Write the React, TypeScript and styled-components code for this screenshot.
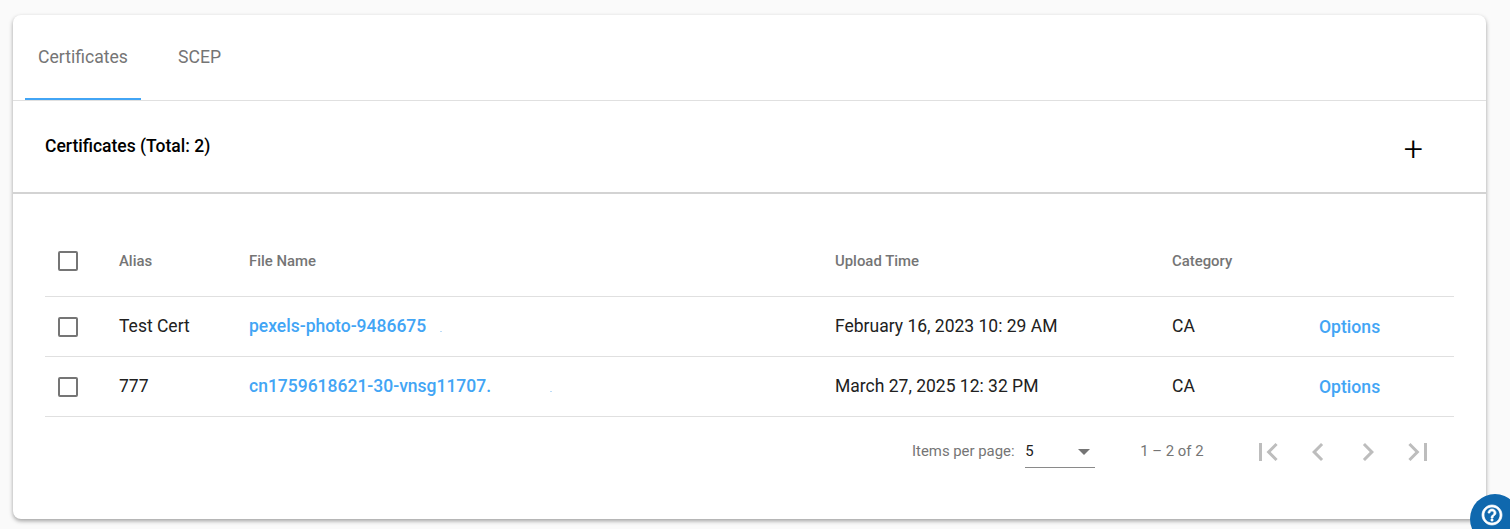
import React from 'react';
import styled, { createGlobalStyle } from 'styled-components';

const GlobalStyle = createGlobalStyle`
  html, body {
    margin: 0;
    padding: 0;
    background: #fafafa;
    font-family: Roboto, "Liberation Sans", sans-serif;
  }
  body {
    height: 529px;
    overflow: hidden;
  }
`;

const rows = [
  { alias: 'Test Cert', file: 'pexels-photo-9486675', time: 'February 16, 2023 10: 29 AM', category: 'CA', gap: 14 },
  { alias: '777', file: 'cn1759618621-30-vnsg11707.', time: 'March 27, 2025 12: 32 PM', category: 'CA', gap: 59 },
];

function App() {
  return (
    <>
      <GlobalStyle />
      <Page>
        <Card>
          <TabBar>
            <Tab $active>Certificates</Tab>
            <Tab>SCEP</Tab>
          </TabBar>
          <SectionHeader>
            <SectionTitle>Certificates (Total: 2)</SectionTitle>
            <AddButton>+</AddButton>
          </SectionHeader>
          <TableWrap>
            <HeadRow>
              <CheckCell><CheckBox /></CheckCell>
              <HeadCell>Alias</HeadCell>
              <HeadCell>File Name</HeadCell>
              <HeadCell>Upload Time</HeadCell>
              <HeadCell>Category</HeadCell>
              <HeadCell />
            </HeadRow>
            {rows.map((row) => (
              <BodyRow key={row.alias}>
                <CheckCell><CheckBox /></CheckCell>
                <BodyCell>{row.alias}</BodyCell>
                <FileLink>
                  {row.file}
                  <Smudge $gap={row.gap} />
                </FileLink>
                <BodyCell>{row.time}</BodyCell>
                <BodyCell>{row.category}</BodyCell>
                <OptionsLink>Options</OptionsLink>
              </BodyRow>
            ))}
            <Paginator>
              <PageLabel>Items per page:</PageLabel>
              <PageSelect>
                <span>5</span>
                <Caret />
              </PageSelect>
              <RangeLabel>1 – 2 of 2</RangeLabel>
              <PagerButtons>
                <PagerButton>
                  <svg width="36" height="36" viewBox="0 0 24 24" fill="currentColor">
                    <path d="M18.41 16.59L13.82 12l4.59-4.59L17 6l-6 6 6 6zM6 6h2v12H6z" />
                  </svg>
                </PagerButton>
                <PagerButton>
                  <svg width="36" height="36" viewBox="0 0 24 24" fill="currentColor">
                    <path d="M15.41 7.41L14 6l-6 6 6 6 1.41-1.41L10.83 12z" />
                  </svg>
                </PagerButton>
                <PagerButton>
                  <svg width="36" height="36" viewBox="0 0 24 24" fill="currentColor">
                    <path d="M10 6L8.59 7.41 13.17 12l-4.58 4.59L10 18l6-6z" />
                  </svg>
                </PagerButton>
                <PagerButton>
                  <svg width="36" height="36" viewBox="0 0 24 24" fill="currentColor">
                    <path d="M5.59 7.41L10.18 12l-4.59 4.59L7 18l6-6-6-6zM16 6h2v12h-2z" />
                  </svg>
                </PagerButton>
              </PagerButtons>
            </Paginator>
          </TableWrap>
        </Card>
        <HelpBadge>
          <svg width="24" height="24" viewBox="0 0 24 24" fill="#fff" stroke="#fff" strokeWidth="0.7">
            <path d="M11 18h2v-2h-2v2zm1-16C6.48 2 2 6.48 2 12s4.48 10 10 10 10-4.48 10-10S17.52 2 12 2zm0 18c-4.41 0-8-3.59-8-8s3.59-8 8-8 8 3.59 8 8-3.59 8-8 8zm0-14c-2.21 0-4 1.79-4 4h2c0-1.1.9-2 2-2s2 .9 2 2c0 2-3 1.75-3 5h2c0-2.25 3-2.5 3-5 0-2.21-1.79-4-4-4z" />
          </svg>
        </HelpBadge>
      </Page>
    </>
  );
}

export default App;

const Page = styled.div`
  height: 529px;
  padding: 15px 24px 10px 13px;
  box-sizing: border-box;
  overflow: hidden;
`;

const Card = styled.div`
  height: 504px;
  background: #fff;
  border-radius: 8px;
  box-shadow: 0 2px 4px rgba(0, 0, 0, 0.36);
`;

const TabBar = styled.div`
  display: flex;
  height: 85px;
  padding-left: 12px;
  border-bottom: 1px solid #e0e0e0;
`;

const Tab = styled.div<{ $active?: boolean }>`
  width: ${(p) => (p.$active ? '116px' : '117px')};
  height: 85px;
  box-sizing: border-box;
  padding-top: 32px;
  text-align: center;
  font-size: 17.6px;
  line-height: 20px;
  color: #757575;
  border-bottom: 2px solid ${(p) => (p.$active ? '#42a5f5' : 'transparent')};
`;

const SectionHeader = styled.div`
  display: flex;
  justify-content: space-between;
  align-items: flex-start;
  height: 91px;
  padding: 0 60px 0 32px;
  border-bottom: 2px solid #d3d3d3;
`;

const SectionTitle = styled.div`
  margin-top: 33px;
  font-size: 17.5px;
  line-height: 24px;
  font-weight: 500;
  color: #000;
`;

const AddButton = styled.div`
  margin-top: 27px;
  margin-right: 3px;
  font-size: 34px;
  line-height: 40px;
  font-weight: 300;
  color: #000;
`;

const TableWrap = styled.div`
  padding: 0 32px;
`;

const gridColumns = '74px 130px 586px 337px 147px 1fr';

const HeadRow = styled.div`
  display: grid;
  grid-template-columns: ${gridColumns};
  align-items: center;
  height: 103px;
  padding-top: 32px;
  box-sizing: border-box;
  border-bottom: 1px solid #e0e0e0;
`;

const BodyRow = styled.div`
  display: grid;
  grid-template-columns: ${gridColumns};
  align-items: center;
  height: 60px;
  box-sizing: border-box;
  border-bottom: 1px solid #e0e0e0;
`;

const CheckCell = styled.div`
  padding-left: 13px;
  display: flex;
  align-items: center;
`;

const CheckBox = styled.div`
  width: 20px;
  height: 20px;
  box-sizing: border-box;
  border: 2px solid #757575;
  border-radius: 2px;
`;

const HeadCell = styled.div`
  font-size: 14.9px;
  font-weight: 500;
  color: #757575;
`;

const BodyCell = styled.div`
  padding-bottom: 2px;
  font-size: 17.5px;
  color: #212121;
`;

const FileLink = styled.div`
  padding-bottom: 2px;
  font-size: 17.5px;
  font-weight: 500;
  color: #42a5f5;
`;

const Smudge = styled.span<{ $gap: number }>`
  display: inline-block;
  width: 2px;
  height: 1px;
  margin-left: ${(p) => p.$gap}px;
  background: #bcdcf8;
`;

const OptionsLink = styled.div`
  font-size: 17.6px;
  font-weight: 500;
  color: #42a5f5;
`;

const Paginator = styled.div`
  display: flex;
  align-items: center;
  height: 70px;
  padding-left: 867px;
`;

const PageLabel = styled.div`
  padding-bottom: 2px;
  font-size: 14.9px;
  color: #757575;
`;

const PageSelect = styled.div`
  width: 70px;
  height: 32px;
  margin-left: 10.7px;
  padding-bottom: 2px;
  box-sizing: border-box;
  border-bottom: 1px solid #8a8a8a;
  display: flex;
  align-items: center;
  justify-content: space-between;
  font-size: 14.9px;
  color: #212121;
`;

const Caret = styled.div`
  width: 0;
  height: 0;
  margin-right: 5px;
  margin-top: 2px;
  border-left: 6px solid transparent;
  border-right: 6px solid transparent;
  border-top: 6px solid #757575;
`;

const RangeLabel = styled.div`
  margin-left: 45px;
  padding-bottom: 2px;
  font-size: 14.9px;
  color: #757575;
`;

const PagerButtons = styled.div`
  display: flex;
  margin-left: 46px;
  gap: 14px;
`;

const PagerButton = styled.div`
  width: 36px;
  height: 36px;
  color: #bdbdbd;
`;

const HelpBadge = styled.div`
  position: fixed;
  left: 1470px;
  top: 494px;
  width: 50px;
  height: 50px;
  border-radius: 25px;
  background: #0f68ae;
  display: flex;
  padding: 9px 0 0 10px;
  box-sizing: border-box;
`;
